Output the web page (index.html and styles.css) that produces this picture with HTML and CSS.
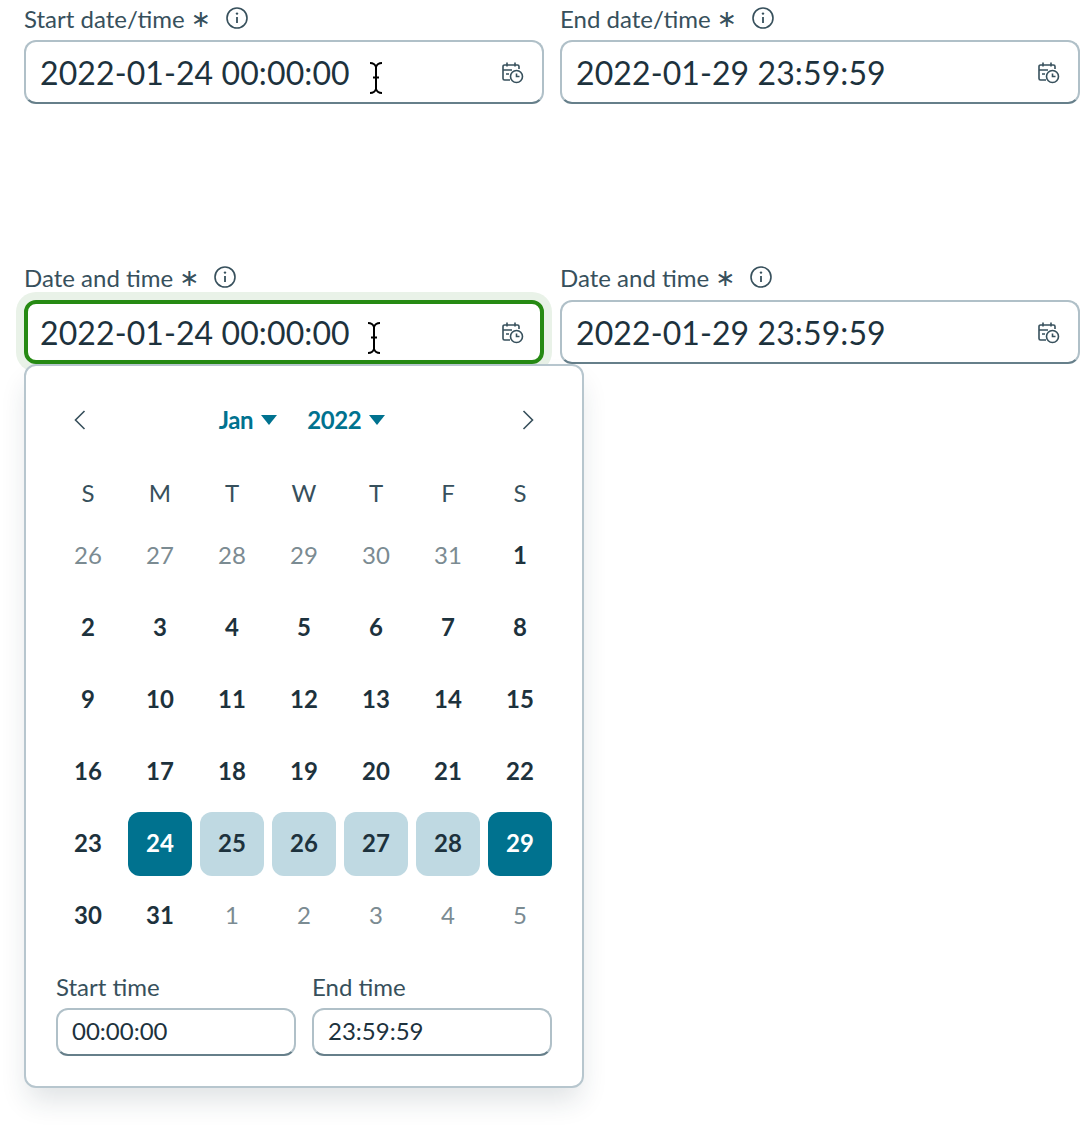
FILE: index.html
```html
<!DOCTYPE html>
<html lang="en">
<head>
<meta charset="utf-8">
<title>Date and time picker</title>
<link rel="stylesheet" href="styles.css">
</head>
<body>
<svg class="defs" width="0" height="0" aria-hidden="true">
  <symbol id="info" viewBox="0 0 24 24"><circle cx="12" cy="12" r="10" fill="none" stroke="currentColor" stroke-width="1.6"/><circle cx="12" cy="7.6" r="1.2" fill="currentColor"/><path d="M12 11v6" stroke="currentColor" stroke-width="1.8" fill="none"/></symbol>
  <symbol id="cal" viewBox="0 0 24 24"><g fill="none" stroke="currentColor" stroke-width="1.6"><path d="M10 20H4.500A1.500 1.500 0 0 1 3 18.500V6.500A1.500 1.500 0 0 1 4.500 5h13A1.500 1.500 0 0 1 19 6.500V9"/><path d="M7 2.500v4M15 2.500v4M3 10h9M6 14h3"/><circle cx="16.500" cy="16.500" r="6"/><path d="M16.500 13.500v3h3"/></g></symbol>
  <symbol id="ibeam" viewBox="0 0 16 32"><path d="M2 1c3 0 5 1 6 4 1-3 3-4 6-4M8 5v22M5 15.500h6M2 31c3 0 5-1 6-4 1 3 3 4 6 4" fill="none" stroke="#000" stroke-width="2"/></symbol>
</svg>

<main class="page">
  <section class="row row-top">
    <div class="field">
      <div class="label">Start date/time <span class="req">∗</span><svg class="info"><use href="#info"/></svg></div>
      <div class="input"><span>2022-01-24 00:00:00</span><svg class="cal"><use href="#cal"/></svg><svg class="ibeam"><use href="#ibeam"/></svg></div>
    </div>
    <div class="field">
      <div class="label">End date/time <span class="req">∗</span><svg class="info"><use href="#info"/></svg></div>
      <div class="input"><span>2022-01-29 23:59:59</span><svg class="cal"><use href="#cal"/></svg></div>
    </div>
  </section>

  <section class="row row-bottom">
    <div class="field">
      <div class="label">Date and time <span class="req">∗</span><svg class="info"><use href="#info"/></svg></div>
      <div class="input focused"><span>2022-01-24 00:00:00</span><svg class="cal"><use href="#cal"/></svg><svg class="ibeam"><use href="#ibeam"/></svg></div>
    </div>
    <div class="field">
      <div class="label">Date and time <span class="req">∗</span><svg class="info"><use href="#info"/></svg></div>
      <div class="input"><span>2022-01-29 23:59:59</span><svg class="cal"><use href="#cal"/></svg></div>
    </div>
  </section>

  <section class="popup">
    <header class="cal-head">
      <svg class="chev" viewBox="0 0 20 20"><path d="M14.500 1 5.500 10l9 9" /></svg>
      <div class="selects">
        <span class="sel">Jan<i class="tri"></i></span>
        <span class="sel">2022<i class="tri"></i></span>
      </div>
      <svg class="chev" viewBox="0 0 20 20"><path d="m5.500 1 9 9-9 9" /></svg>
    </header>
    <div class="grid">
      <div class="dow">S</div><div class="dow">M</div><div class="dow">T</div><div class="dow">W</div><div class="dow">T</div><div class="dow">F</div><div class="dow">S</div>
      <div class="day out">26</div><div class="day out">27</div><div class="day out">28</div><div class="day out">29</div><div class="day out">30</div><div class="day out">31</div><div class="day">1</div>
      <div class="day">2</div><div class="day">3</div><div class="day">4</div><div class="day">5</div><div class="day">6</div><div class="day">7</div><div class="day">8</div>
      <div class="day">9</div><div class="day">10</div><div class="day">11</div><div class="day">12</div><div class="day">13</div><div class="day">14</div><div class="day">15</div>
      <div class="day">16</div><div class="day">17</div><div class="day">18</div><div class="day">19</div><div class="day">20</div><div class="day">21</div><div class="day">22</div>
      <div class="day">23</div><div class="day end">24</div><div class="day mid">25</div><div class="day mid">26</div><div class="day mid">27</div><div class="day mid">28</div><div class="day end">29</div>
      <div class="day">30</div><div class="day">31</div><div class="day out">1</div><div class="day out">2</div><div class="day out">3</div><div class="day out">4</div><div class="day out">5</div>
    </div>
    <div class="times">
      <div class="time"><div class="time-label">Start time</div><div class="time-input">00:00:00</div></div>
      <div class="time"><div class="time-label">End time</div><div class="time-input">23:59:59</div></div>
    </div>
  </section>
</main>
</body>
</html>
```
FILE: styles.css
```css
* { box-sizing: border-box; }
html, body { margin: 0; padding: 0; background: #fff; }
body { font-family: Lato, "Liberation Sans", sans-serif; color: #1d323d; height: 1128px; overflow: hidden; }
.defs { position: absolute; }
.page { padding-left: 24px; }
.row { display: flex; gap: 16px; }
.row-top { padding-top: 1px; }
.row-top .label { height: 39px; padding-bottom: 4px; }
.row-top .info { margin-top: -2px; }
.row-bottom { margin-top: 160px; }
.row-bottom .label { height: 36px; padding-bottom: 8px; }
.row-bottom .info { margin-top: -2px; }
.field { width: 520px; }
.label { display: flex; align-items: center; font-size: 24px; line-height: 32px; color: #37505c; }
.req { margin-left: 6px; font-family: "DejaVu Sans", sans-serif; font-size: 24px; }
.info { width: 24px; height: 24px; margin-left: 14px; color: #37505c; }
.input { position: relative; height: 64px; padding: 0 18px 0 14px; display: flex; align-items: center; justify-content: space-between; border: 2px solid #b0c0c8; border-bottom-color: #667f8a; border-radius: 12px; font-size: 32px; letter-spacing: 0.1px; background: #fff; color: #1d323d; }
.input.focused { border: 4px solid #268a13; padding: 0 16px 0 12px; box-shadow: 0 0 0 8px #e9f2e8; }
.cal { width: 24px; height: 24px; color: #37505c; flex: none; }
.ibeam { position: absolute; left: 342px; top: 20px; width: 16px; height: 32px; }
.focused .ibeam { left: 338px; top: 18px; }
.popup { position: relative; width: 560px; height: 724px; padding: 32px 30px 0; border: 2px solid #b7c6ce; border-radius: 12px; background: #fff; box-shadow: 0 16px 28px -4px rgba(29, 50, 61, 0.14); }
.cal-head { height: 44px; display: flex; align-items: center; justify-content: space-between; padding: 0 14px; }
.chev { width: 20px; height: 20px; fill: none; stroke: #37505c; stroke-width: 1.6; }
.selects { display: flex; gap: 30px; margin-right: 4px; margin-top: -2px; }
.sel { display: flex; align-items: center; gap: 8px; font-size: 24px; font-weight: 700; letter-spacing: -0.4px; color: #00728f; }
.tri { width: 0; height: 0; margin-top: 2px; border-left: 8px solid transparent; border-right: 8px solid transparent; border-top: 10px solid #00728f; }
.grid { margin-top: 26px; display: grid; grid-template-columns: repeat(7, 64px); grid-template-rows: 48px; grid-auto-rows: 64px; gap: 8px; }
.dow, .day { display: flex; align-items: center; justify-content: center; font-size: 24px; border-radius: 12px; }
.dow { color: #37505c; }
.day { padding-bottom: 4px; font-weight: 700; color: #1d323d; }
.day.out { font-weight: 400; color: #7b8b92; }
.day.end { background: #00728f; color: #fff; }
.day.mid { background: #bfd9e2; }
.times { margin-top: 24px; display: flex; gap: 16px; }
.time { width: 240px; }
.time-label { margin-top: -1px; font-size: 24px; line-height: 32px; color: #37505c; }
.time-input { margin-top: 5px; height: 48px; padding: 0 14px 4px; display: flex; align-items: center; font-size: 24px; border: 2px solid #b0c0c8; border-bottom-color: #667f8a; border-radius: 12px; color: #1d323d; }
```
